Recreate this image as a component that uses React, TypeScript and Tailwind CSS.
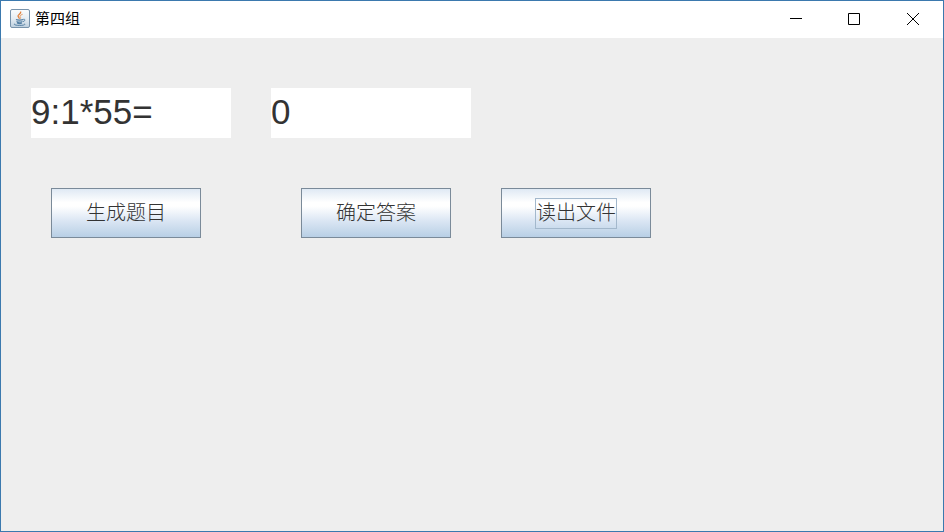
/**
 * @file Arithmetic quiz window: question, answer and the three actions.
 */
import { useState } from 'react';

const actionClass =
  'flex h-[50px] w-[150px] items-center justify-center border border-[#7a8a99] bg-[linear-gradient(to_bottom,#dfe9f4_0%,#ffffff_28%,#ffffff_36%,#dce7f4_65%,#b8cfe5_100%)] pt-px text-xl leading-[29px] font-light text-[#333333]';

const fieldClass =
  "h-[50px] w-[200px] bg-white pb-[2px] font-['Liberation_Sans',Arial,sans-serif] text-[35px] text-[#333333] outline-none";

function JavaIcon() {
  return (
    <svg width="20" height="19" viewBox="0 0 20 19" fill="none" aria-hidden="true">
      <defs>
        <linearGradient id="tile" x1="0" y1="0" x2="0" y2="1">
          <stop offset="0" stopColor="#fafcfd" />
          <stop offset="0.5" stopColor="#e6edf3" />
          <stop offset="1" stopColor="#bdcfde" />
        </linearGradient>
      </defs>
      <rect x="0.5" y="0.5" width="19" height="18" rx="1.5" fill="url(#tile)" stroke="#7893ab" />
      <path d="M10.6 2.5c1.2 2-3 3-2.6 4.7.2.9 1.4 1.5 1.5 2.6" stroke="#e2803c" strokeWidth="1.3" />
      <path d="M12.6 5.3c-2.3.8-3.2 1.7-2.2 2.9.5.6.2 1.2-.4 1.7" stroke="#e79a62" strokeWidth="1" />
      <path d="M6 10.5c1.2.8 5.7.7 7.2.1M6.5 12.4c1.5.8 4.4.8 6 .1M7 14.1c1.5.6 3.6.6 5 0" stroke="#5580a4" strokeWidth="1.1" />
      <path d="M13.3 10.3c2.2-.5 2.1 1.7-.2 2.3" stroke="#5580a4" />
      <path d="M5 14.7c-2.2 1.1 1.5 1.7 5 1.7 3.2 0 6-.7 4.4-1.7" stroke="#5580a4" />
    </svg>
  );
}

function TitleBar() {
  return (
    <header className="flex h-[37px] items-center justify-between bg-white pb-[2px]">
      <div className="flex items-center gap-[5px] pl-[9px]">
        <JavaIcon />
        <h1 className="text-[15px] leading-5 text-black">第四组</h1>
      </div>
      <div className="flex self-stretch">
        <button type="button" aria-label="最小化" className="flex w-[58px] items-center justify-center">
          <svg width="12" height="12" viewBox="0 0 12 12" stroke="#000">
            <path d="M0 5.5h12" />
          </svg>
        </button>
        <button type="button" aria-label="最大化" className="flex w-[58px] items-center justify-center">
          <svg width="12" height="12" viewBox="0 0 12 12" fill="none" stroke="#000">
            <path d="M.5.5h11v11H.5z" />
          </svg>
        </button>
        <button type="button" aria-label="关闭" className="flex w-[60px] items-center justify-center">
          <svg width="12" height="12" viewBox="0 0 12 12" stroke="#000">
            <path d="M0 0l12 12M12 0L0 12" />
          </svg>
        </button>
      </div>
    </header>
  );
}

export default function App() {
  const [question, setQuestion] = useState('9:1*55=');
  const [answer, setAnswer] = useState('0');

  return (
    <div className="flex min-h-screen flex-col border border-[#3b79ae] bg-[#eeeeee] font-['Liberation_Sans','Noto_Sans_CJK_SC',sans-serif]">
      <TitleBar />
      <main className="flex-1 px-[30px] py-[50px]">
        <div className="flex gap-10">
          <input aria-label="题目" className={fieldClass} value={question} onChange={(e) => setQuestion(e.target.value)} />
          <input aria-label="答案" className={fieldClass} value={answer} onChange={(e) => setAnswer(e.target.value)} />
        </div>
        <div className="mt-[50px] flex gap-[50px] pl-5">
          <button type="button" className={actionClass}>生成题目</button>
          <div className="pl-[50px]">
            <button type="button" className={actionClass}>确定答案</button>
          </div>
          <button type="button" className={actionClass}>
            <span className="border border-[#a3b8cc]">读出文件</span>
          </button>
        </div>
      </main>
    </div>
  );
}
